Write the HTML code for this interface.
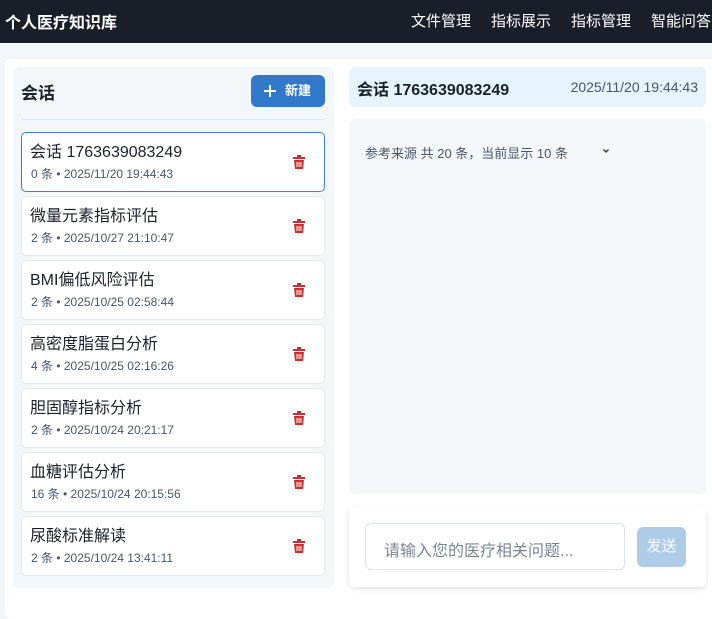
<!DOCTYPE html>
<html><head><meta charset="utf-8"><style>
*{box-sizing:border-box;margin:0;padding:0}
body{width:712px;height:598px;overflow:hidden;background:#f2f6f9;font-family:"Liberation Sans","Noto Sans CJK SC",sans-serif;position:relative;color:#1a202c}
.nav{position:absolute;left:0;top:0;width:712px;height:43px;background:#1a1e29;color:#fff}
.nav .t{position:absolute;left:5px;top:9px;font-size:16px;font-weight:bold}
.nav .l{position:absolute;top:10px;font-size:15px}
.lp{position:absolute;left:5px;top:59px;width:720px;height:560px;background:#fff;border-radius:6px}
.in{position:absolute;left:13px;top:67px;width:321px;height:521px;background:#f4f7fa;border-radius:6px}
.h{position:absolute;left:21px;top:79px;font-size:17px;font-weight:bold}
.btn{position:absolute;left:251px;top:75px;width:74px;height:32px;background:#3078c8;border-radius:6px;color:#fff;font-size:13px;font-weight:bold;line-height:32px;padding-left:34px}
.btn:before{content:"";position:absolute;left:13px;top:15px;width:12px;height:2px;background:#fff}
.btn:after{content:"";position:absolute;left:18px;top:10px;width:2px;height:12px;background:#fff}
.sep{position:absolute;left:21px;top:119px;width:304px;height:1px;background:#e2e8f0}
.c{position:absolute;left:21px;width:304px;height:60px;background:#fff;border:1px solid #e2e8f0;border-radius:5px}
.c.a{border-color:#3a7fd0}
.c .n{position:absolute;left:8px;top:10px;font-size:16px;line-height:20px}
.c .m{position:absolute;left:9px;top:32px;font-size:12px;color:#4a5568}
.c svg{position:absolute;left:271px;top:22px}
.rh{position:absolute;left:349px;top:67px;width:357px;height:40px;background:#e6f4fe;border-radius:6px}
.rh .a{position:absolute;left:8px;top:9px;font-size:16px;font-weight:bold}
.rh .b{position:absolute;right:8px;top:12px;font-size:14px;color:#4a5568}
.mb{position:absolute;left:349px;top:119px;width:357px;height:375px;background:#f4f7fa;border-radius:6px}
.mb .s{position:absolute;left:16px;top:24px;font-size:13px;color:#4a5568}
.ic{position:absolute;left:349px;top:507px;width:357px;height:80px;background:#fff;border-radius:6px;box-shadow:0 2px 6px rgba(0,0,0,.12)}
.inp{position:absolute;left:16px;top:16px;width:260px;height:47px;border:1px solid #dbe2ec;border-radius:6px;font-size:16px;color:#7a8596;padding:13px 0 0 18px}
.sb{position:absolute;left:288px;top:20px;width:49px;height:40px;background:#aecbe8;border-radius:6px;color:#fff;font-size:15px;text-align:center;line-height:40px}
</style></head><body>
<div class="nav"><span class="t">个人医疗知识库</span>
<span class="l" style="left:411px">文件管理</span><span class="l" style="left:491px">指标展示</span><span class="l" style="left:571px">指标管理</span><span class="l" style="left:651px">智能问答</span></div>
<div class="lp"></div><div class="in"></div>
<div class="h">会话</div><div class="btn">新建</div><div class="sep"></div>

<div class="c a" style="top:132px"><div class="n">会话 1763639083249</div><div class="m">0 条 • 2025/11/20 19:44:43</div><svg width="12" height="14" viewBox="0 0 12 14"><rect x="0" y="2" width="12" height="2" fill="#c53030"/><rect x="4" y="0" width="4" height="2" fill="#c53030"/><path d="M1 5h10l-1 9H2z" fill="#c53030"/><path d="M4 7v5M6 7v5M8 7v5" stroke="#fff" stroke-width="1"/></svg></div>
<div class="c" style="top:196px"><div class="n">微量元素指标评估</div><div class="m">2 条 • 2025/10/27 21:10:47</div><svg width="12" height="14" viewBox="0 0 12 14"><rect x="0" y="2" width="12" height="2" fill="#c53030"/><rect x="4" y="0" width="4" height="2" fill="#c53030"/><path d="M1 5h10l-1 9H2z" fill="#c53030"/><path d="M4 7v5M6 7v5M8 7v5" stroke="#fff" stroke-width="1"/></svg></div>
<div class="c" style="top:260px"><div class="n">BMI偏低风险评估</div><div class="m">2 条 • 2025/10/25 02:58:44</div><svg width="12" height="14" viewBox="0 0 12 14"><rect x="0" y="2" width="12" height="2" fill="#c53030"/><rect x="4" y="0" width="4" height="2" fill="#c53030"/><path d="M1 5h10l-1 9H2z" fill="#c53030"/><path d="M4 7v5M6 7v5M8 7v5" stroke="#fff" stroke-width="1"/></svg></div>
<div class="c" style="top:324px"><div class="n">高密度脂蛋白分析</div><div class="m">4 条 • 2025/10/25 02:16:26</div><svg width="12" height="14" viewBox="0 0 12 14"><rect x="0" y="2" width="12" height="2" fill="#c53030"/><rect x="4" y="0" width="4" height="2" fill="#c53030"/><path d="M1 5h10l-1 9H2z" fill="#c53030"/><path d="M4 7v5M6 7v5M8 7v5" stroke="#fff" stroke-width="1"/></svg></div>
<div class="c" style="top:388px"><div class="n">胆固醇指标分析</div><div class="m">2 条 • 2025/10/24 20:21:17</div><svg width="12" height="14" viewBox="0 0 12 14"><rect x="0" y="2" width="12" height="2" fill="#c53030"/><rect x="4" y="0" width="4" height="2" fill="#c53030"/><path d="M1 5h10l-1 9H2z" fill="#c53030"/><path d="M4 7v5M6 7v5M8 7v5" stroke="#fff" stroke-width="1"/></svg></div>
<div class="c" style="top:452px"><div class="n">血糖评估分析</div><div class="m">16 条 • 2025/10/24 20:15:56</div><svg width="12" height="14" viewBox="0 0 12 14"><rect x="0" y="2" width="12" height="2" fill="#c53030"/><rect x="4" y="0" width="4" height="2" fill="#c53030"/><path d="M1 5h10l-1 9H2z" fill="#c53030"/><path d="M4 7v5M6 7v5M8 7v5" stroke="#fff" stroke-width="1"/></svg></div>
<div class="c" style="top:516px"><div class="n">尿酸标准解读</div><div class="m">2 条 • 2025/10/24 13:41:11</div><svg width="12" height="14" viewBox="0 0 12 14"><rect x="0" y="2" width="12" height="2" fill="#c53030"/><rect x="4" y="0" width="4" height="2" fill="#c53030"/><path d="M1 5h10l-1 9H2z" fill="#c53030"/><path d="M4 7v5M6 7v5M8 7v5" stroke="#fff" stroke-width="1"/></svg></div>

<div class="rh"><span class="a">会话 1763639083249</span><span class="b">2025/11/20 19:44:43</span></div>
<div class="mb"><span class="s">参考来源 共 20 条，当前显示 10 条</span>
<svg style="position:absolute;left:253px;top:29px" width="8" height="6" viewBox="0 0 8 6"><path d="M1.5 1.5L4 4l2.5-2.5" stroke="#2d3748" stroke-width="1.4" fill="none"/></svg></div>
<div class="ic"><div class="inp">请输入您的医疗相关问题...</div><div class="sb">发送</div></div>
</body></html>
